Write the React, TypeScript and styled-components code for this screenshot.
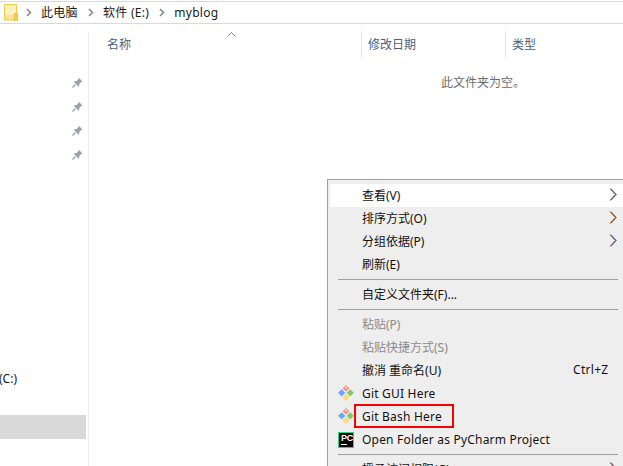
import styled, { createGlobalStyle } from 'styled-components'

const FONT = '"Noto Sans", "Noto Sans CJK SC", sans-serif'

const GlobalStyle = createGlobalStyle`
  html, body {
    margin: 0;
    padding: 0;
    background: #fff;
    overflow: hidden;
  }
  * {
    box-sizing: border-box;
  }
`

function Chevron() {
  return (
    <svg width="7" height="9" viewBox="0 0 7 9">
      <path d="M2 1l3.500 3.500L2 8" fill="none" stroke="#8a8a8a" strokeWidth="1.600" />
    </svg>
  )
}

function FolderIcon() {
  return (
    <svg width="14" height="17" viewBox="0 0 14 17">
      <path d="M.5.5h12v15.5H.5z" fill="#fde38f" stroke="#eec94f" />
      <path d="M1 1h11v10H1z" fill="#fff0bd" />
      <path d="M10.500 9.500h3v7h-3z" fill="#f6d260" stroke="#e8bd3c" />
    </svg>
  )
}

function PinIcon() {
  return (
    <svg width="11" height="11" viewBox="0 0 11 11">
      <path d="M6.500.5l4 4-1.300.6-2 2 .1 1.900-.8.500-4.500-4.500.5-.8 1.900.1 2-2z" fill="#98a2ab" />
      <path d="M3.500 7.500L.5 10.500" stroke="#98a2ab" strokeWidth="1.200" />
    </svg>
  )
}

// the fringes copy the subpixel look of the arrow in the classic menu
function SubArrow() {
  const d = 'M1.500.7l5.200 5.800-5.200 5.800'
  return (
    <svg width="9" height="13" viewBox="0 0 9 13">
      <path d={d} fill="none" stroke="#f0a030" strokeWidth="1" transform="translate(-.7 0)" />
      <path d={d} fill="none" stroke="#3f9cf0" strokeWidth="1" transform="translate(.7 0)" />
      <path d={d} fill="none" stroke="#7a2a3a" strokeWidth=".9" />
    </svg>
  )
}

function GitIcon() {
  return (
    <svg width="16" height="16" viewBox="0 0 16 16">
      <path d="M8 0l3.300 3.300L8 6.600 4.700 3.300z" fill="#f08c82" />
      <path d="M8 1l1.600 1.600L8 4.200 6.400 2.600z" fill="#f8c4be" />
      <path d="M3.700 4.200l3.600 3.600-3.600 3.600L.1 7.800z" fill="#68a6f4" />
      <path d="M12.300 4.200l3.600 3.600-3.600 3.600-3.600-3.600z" fill="#80ca68" />
      <path d="M8 8.400l3.700 3.800L8 16l-3.700-3.800z" fill="#f7dc80" />
    </svg>
  )
}

function PyCharmIcon() {
  return (
    <PcBadge>
      <span>PC</span>
      <i />
    </PcBadge>
  )
}

const rows: { label: string; arrow?: boolean; muted?: boolean; active?: boolean; shortcut?: string; sep?: boolean }[] = [
  { label: '查看(V)', arrow: true, active: true },
  { label: '排序方式(O)', arrow: true },
  { label: '分组依据(P)', arrow: true },
  { label: '刷新(E)', sep: true },
  { label: '自定义文件夹(F)...', sep: true },
  { label: '粘贴(P)', muted: true },
  { label: '粘贴快捷方式(S)', muted: true },
  { label: '撤消 重命名(U)', shortcut: 'Ctrl+Z' },
]

export default function App() {
  return (
    <Window>
      <GlobalStyle />
      <AddressBar>
        <FolderIcon />
        <Crumbs>
          <Chevron />
          <Crumb>此电脑</Crumb>
          <Chevron />
          <Crumb>软件 (E:)</Crumb>
          <Chevron />
          <Crumb>myblog</Crumb>
        </Crumbs>
      </AddressBar>
      <Body>
        <Sidebar>
          <PinList>
            {[0, 1, 2, 3].map((i) => (
              <PinRow key={i}>
                <PinIcon />
              </PinRow>
            ))}
          </PinList>
          <DriveRow>(C:)</DriveRow>
          <SelectedRow />
        </Sidebar>
        <Main>
          <Header>
            <NameColumn>
              名称
              <SortCaret>
                <svg width="9" height="5" viewBox="0 0 9 5">
                  <path d="M.5 4.500l4-4 4 4" fill="none" stroke="#7d8794" />
                </svg>
              </SortCaret>
            </NameColumn>
            <DateColumn>修改日期</DateColumn>
            <TypeColumn>类型</TypeColumn>
          </Header>
          <EmptyNote>此文件夹为空。</EmptyNote>
        </Main>
      </Body>

      <Menu>
        {rows.map((r) => (
          <div key={r.label}>
            <MenuRow $active={r.active} $muted={r.muted} $cjk>
              <MenuLabel>{r.label}</MenuLabel>
              {r.shortcut && <Shortcut>{r.shortcut}</Shortcut>}
              {r.arrow && (
                <ArrowSlot>
                  <SubArrow />
                </ArrowSlot>
              )}
            </MenuRow>
            {r.sep && <Separator />}
          </div>
        ))}
        <MenuRow>
          <IconSlot>
            <GitIcon />
          </IconSlot>
          <LatinLabel>Git GUI Here</LatinLabel>
        </MenuRow>
        <MenuRow>
          <IconSlot>
            <GitIcon />
          </IconSlot>
          <LatinLabel>Git Bash Here</LatinLabel>
          <Highlight />
        </MenuRow>
        <MenuRow>
          <IconSlot>
            <PyCharmIcon />
          </IconSlot>
          <LatinLabel>Open Folder as PyCharm Project</LatinLabel>
        </MenuRow>
        <Separator />
        <MenuRow $cjk>
          <MenuLabel>授予访问权限(G)</MenuLabel>
          <ArrowSlot>
            <SubArrow />
          </ArrowSlot>
        </MenuRow>
      </Menu>
    </Window>
  )
}

const Window = styled.div`
  position: relative;
  width: 623px;
  height: 466px;
  overflow: hidden;
  background: #fff;
  font-family: ${FONT};
  font-size: 12px;
  color: #1a1a1a;
`
const AddressBar = styled.div`
  display: flex;
  align-items: center;
  height: 23px;
  margin-top: 1px;
  padding-left: 4px;
  border-top: 1px solid #d9d9d9;
  border-bottom: 1px solid #d9d9d9;
`
const Crumbs = styled.div`
  display: flex;
  align-items: center;
  padding-left: 7px;
  gap: 9px;
  svg {
    flex: none;
  }
`
const Crumb = styled.span`
  line-height: 20px;
  letter-spacing: 0.3px;
`
const Body = styled.div`
  display: flex;
  height: 442px;
  padding-top: 7px;
`
const Sidebar = styled.div`
  width: 89px;
  flex: none;
  border-right: 1px solid #f0f0f0;
  padding-right: 2px;
`
const PinList = styled.div`
  padding-top: 39px;
`
const PinRow = styled.div`
  display: flex;
  align-items: center;
  justify-content: flex-end;
  height: 24px;
  padding-right: 3px;
`
const DriveRow = styled.div`
  height: 24px;
  line-height: 24px;
  margin-top: 201px;
  margin-left: -1px;
`
const SelectedRow = styled.div`
  height: 24px;
  margin-top: 24px;
  background: #d9d9d9;
`
const Main = styled.div`
  flex: 1;
  min-width: 0;
  overflow: hidden;
`
const Header = styled.div`
  display: flex;
  height: 27px;
  line-height: 28px;
  color: #4c607a;
`
const NameColumn = styled.div`
  position: relative;
  width: 272px;
  padding-left: 18px;
`
const SortCaret = styled.span`
  position: absolute;
  left: 138px;
  top: 1px;
  display: flex;
`
const DateColumn = styled.div`
  width: 144px;
  padding-left: 6px;
  border-left: 1px solid #e5e5e5;
`
const TypeColumn = styled.div`
  flex: 1;
  padding-left: 6px;
  border-left: 1px solid #e5e5e5;
`
const EmptyNote = styled.div`
  margin: 15px 0 0 352px;
  color: #6d6d6d;
  line-height: 20px;
  white-space: nowrap;
`
const Menu = styled.div`
  position: absolute;
  left: 327px;
  top: 179px;
  width: 320px;
  height: 300px;
  padding: 4px 2px;
  background: #eeeeee;
  border: 1px solid #a0a0a0;
`
const MenuRow = styled.div<{ $active?: boolean; $muted?: boolean; $cjk?: boolean }>`
  position: relative;
  display: flex;
  align-items: center;
  height: 23px;
  padding-left: 32px;
  padding-bottom: ${(p) => (p.$cjk ? '2px' : '0')};
  background: ${(p) => (p.$active ? '#fff' : 'transparent')};
  color: ${(p) => (p.$muted ? '#8a8a8a' : '#111')};
`
const MenuLabel = styled.span`
  white-space: nowrap;
`
const LatinLabel = styled(MenuLabel)`
  letter-spacing: 0.2px;
`
const Shortcut = styled.span`
  position: absolute;
  left: 243px;
  letter-spacing: 0.3px;
`
const ArrowSlot = styled.span`
  position: absolute;
  left: 279px;
  top: 4px;
  display: flex;
`
const IconSlot = styled.span`
  position: absolute;
  left: 8px;
  top: 3px;
  display: flex;
`
const Highlight = styled.span`
  position: absolute;
  left: 24px;
  top: -1px;
  width: 100px;
  height: 24px;
  border: 2px solid #f00;
`
const Separator = styled.div`
  width: 280px;
  height: 1px;
  margin: 3px 0 3px 8px;
  background: #a0a0a0;
`
const PcBadge = styled.span`
  position: relative;
  display: block;
  width: 16px;
  height: 16px;
  margin-top: 1px;
  background: #000;
  border: 1px solid #21d789;
  color: #fff;
  span {
    position: absolute;
    left: 2px;
    top: 1px;
    font: bold 9px/9px 'Liberation Sans', sans-serif;
    letter-spacing: -0.3px;
  }
  i {
    position: absolute;
    left: 2px;
    bottom: 2px;
    width: 6px;
    height: 1px;
    background: #fff;
  }
`
